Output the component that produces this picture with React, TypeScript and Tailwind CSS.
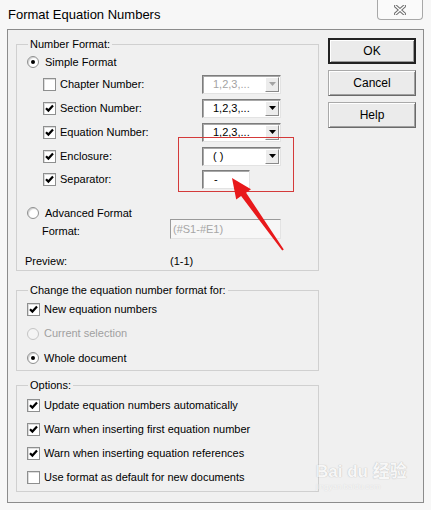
import React from 'react';

function Check({ checked }: { checked?: boolean }) {
  return (
    <span className="w-[13px] h-[13px] shrink-0 bg-white border border-[#8e8f8f] shadow-[inset_1px_1px_0_#dcdcdc] flex items-center justify-center">
      {checked && (
        <svg width="9" height="9" viewBox="0 0 9 9">
          <path d="M1 4.2 L3.4 6.6 L8 1.6" stroke="#000" strokeWidth="2.2" fill="none" />
        </svg>
      )}
    </span>
  );
}

function Radio({ checked, disabled }: { checked?: boolean; disabled?: boolean }) {
  return (
    <span
      className={
        disabled
          ? 'w-[12px] h-[12px] shrink-0 rounded-full border border-[#c4c4c4] bg-[#f4f4f4] flex items-center justify-center'
          : 'w-[12px] h-[12px] shrink-0 rounded-full border border-[#8e8f8f] bg-white shadow-[inset_1px_1px_1px_#d0d0d0] flex items-center justify-center'
      }
    >
      {checked && <span className="w-[4px] h-[4px] rounded-full bg-black" />}
    </span>
  );
}

function Combo({ value, disabled }: { value: string; disabled?: boolean }) {
  return (
    <div className="w-[79px] h-[19px] flex items-center bg-white border border-t-[#7d7d7d] border-l-[#7d7d7d] border-b-[#e3e3e3] border-r-[#e3e3e3] shadow-[inset_1px_1px_0_#a8a8a8]">
      <span className={'flex-1 pl-[10px] ' + (disabled ? 'text-[#a3a3a3]' : 'text-black')}>{value}</span>
      <span className="w-[14px] h-[15px] mr-[1px] flex items-center justify-center bg-[#ececec] border border-t-white border-l-white border-b-[#8a8a8a] border-r-[#8a8a8a]">
        <svg width="7" height="4" viewBox="0 0 7 4">
          <path d="M0 0 H7 L3.5 4 Z" fill={disabled ? '#a3a3a3' : '#000'} />
        </svg>
      </span>
    </div>
  );
}

function Button({ label, primary }: { label: string; primary?: boolean }) {
  return (
    <div
      className={
        'w-[88px] h-[26px] flex items-center justify-center bg-[#ebebeb] text-[12px] ' +
        (primary
          ? 'border-2 border-[#222] shadow-[inset_1px_1px_0_#fff,inset_-1px_-1px_0_#9a9a9a]'
          : 'border border-[#a9a9a9] border-b-[#6a6a6a] border-r-[#6a6a6a] shadow-[inset_1px_1px_0_#fff,inset_-1px_-1px_0_#a0a0a0]')
      }
    >
      {label}
    </div>
  );
}

function Group({ title, children, className }: { title: string; children: React.ReactNode; className?: string }) {
  return (
    <fieldset className={'w-[303px] border border-[#d0d0d0] px-0 ' + (className ?? '')}>
      <legend className="ml-[11px] px-[2px] h-[15px] leading-[15px]">{title}</legend>
      {children}
    </fieldset>
  );
}

const simpleRows = [
  { label: 'Chapter Number:', checked: false, combo: '1,2,3,...', disabled: true },
  { label: 'Section Number:', checked: true, combo: '1,2,3,...' },
  { label: 'Equation Number:', checked: true, combo: '1,2,3,...' },
  { label: 'Enclosure:', checked: true, combo: '( )' },
];

const options = [
  { label: 'Update equation numbers automatically', checked: true },
  { label: 'Warn when inserting first equation number', checked: true },
  { label: 'Warn when inserting equation references', checked: true },
  { label: 'Use format as default for new documents', checked: false },
];

export default function App() {
  return (
    <div className="relative w-[431px] h-[510px] overflow-hidden bg-[#f7f7f7] text-[11px] text-black font-['Liberation_Sans',Arial,sans-serif]">
      {/* title bar */}
      <div className="h-[29px] flex items-start">
        <span className="ml-[8px] mt-[7px] text-[13px] leading-[16px]">Format Equation Numbers</span>
        <div className="ml-auto mr-[8px] w-[46px] h-[20px] rounded-b-[4px] border border-t-0 border-[#a8a8a8] bg-[#fafafa] flex items-center justify-center">
          <svg width="12" height="10" viewBox="0 0 12 10">
            <path d="M1.5 1 L10.5 9 M10.5 1 L1.5 9" stroke="#6d6d6d" strokeWidth="3.4" strokeLinecap="square" />
            <path d="M1.5 1 L10.5 9 M10.5 1 L1.5 9" stroke="#fff" strokeWidth="1.4" strokeLinecap="square" />
          </svg>
        </div>
      </div>

      {/* client area */}
      <div className="ml-[7px] w-[417px] h-[474px] border border-[#8c8c8c] bg-[#f0f0f0] flex">
        <div className="pl-[8px] flex flex-col">
          <Group title="Number Format:" className="mt-[7px]">
            <div className="flex flex-col">
              <div className="h-[20px] flex items-center pl-[10px]">
                <Radio checked />
                <span className="ml-[6px]">Simple Format</span>
              </div>
              {simpleRows.map((r) => (
                <div key={r.label} className="h-[24px] flex items-center pl-[26px]">
                  <Check checked={r.checked} />
                  <span className="ml-[4px] w-[142px]">{r.label}</span>
                  <Combo value={r.combo} disabled={r.disabled} />
                </div>
              ))}
              <div className="h-[23px] flex items-center pl-[26px]">
                <Check checked />
                <span className="ml-[4px] w-[142px]">Separator:</span>
                <div className="w-[48px] h-[19px] flex items-center bg-white border border-t-[#7d7d7d] border-l-[#7d7d7d] border-b-[#e3e3e3] border-r-[#e3e3e3] shadow-[inset_1px_1px_0_#a8a8a8]">
                  <span className="pl-[11px]">-</span>
                </div>
              </div>
              <div className="mt-[14px] h-[16px] flex items-center pl-[10px]">
                <Radio />
                <span className="ml-[6px]">Advanced Format</span>
              </div>
              <div className="-mt-[2px] h-[20px] flex items-start pl-[25px]">
                <span className="w-[128px] mt-[6px] leading-[13px]">Format:</span>
                <div className="w-[111px] h-[20px] flex items-center bg-[#f7f7f7] border border-t-[#9a9a9a] border-l-[#9a9a9a] border-b-[#e3e3e3] border-r-[#e3e3e3]">
                  <span className="pl-[2px] text-[#a6a6a6]">(#S1-#E1)</span>
                </div>
              </div>
              <div className="mt-[13px] h-[18px] flex items-center pl-[8px]">
                <span className="w-[145px]">Preview:</span>
                <span>(1-1)</span>
              </div>
            </div>
          </Group>

          <Group title="Change the equation number format for:" className="mt-[12px]">
            <div className="flex flex-col">
              <div className="h-[23px] flex items-center pl-[10px]">
                <Check checked />
                <span className="ml-[4px]">New equation numbers</span>
              </div>
              <div className="h-[25px] flex items-center pl-[10px]">
                <Radio disabled />
                <span className="ml-[5px] text-[#a0a0a0]">Current selection</span>
              </div>
              <div className="h-[24px] flex items-center pl-[10px]">
                <Radio checked />
                <span className="ml-[5px]">Whole document</span>
              </div>
            </div>
          </Group>

          <Group title="Options:" className="mt-[7px]">
            <div className="flex flex-col pb-[2px]">
              {options.map((o) => (
                <div key={o.label} className="h-[24px] flex items-center pl-[10px]">
                  <Check checked={o.checked} />
                  <span className="ml-[4px]">{o.label}</span>
                </div>
              ))}
            </div>
          </Group>
        </div>

        <div className="ml-[9px] pt-[8px] flex flex-col gap-[6px]">
          <Button label="OK" primary />
          <Button label="Cancel" />
          <Button label="Help" />
        </div>
      </div>

      {/* annotation: red box + arrow */}
      <div className="absolute left-[178px] top-[137px] w-[116px] h-[55px] border border-[#d43a3a]" />
      <svg className="absolute left-0 top-0" width="431" height="510" viewBox="0 0 431 510">
        <polygon
          points="232,178 251,189.2 246.1,192.7 283.8,249.4 282.2,250.6 241.1,196.1 236.2,199.6"
          fill="#e8191b"
        />
      </svg>

      {/* watermark */}
      <div className="absolute left-[316px] top-[462px] flex flex-col items-start opacity-50 select-none">
        <span className="text-[17px] leading-[20px] font-bold text-white [text-shadow:0_0_1px_#9a9a9a,0_0_1px_#9a9a9a] font-['Liberation_Sans','Noto_Sans_CJK_SC',sans-serif]">
          Bai du 经验
        </span>
        <span className="text-[8px] leading-[9px] text-white [text-shadow:0_0_1px_#b0b0b0]">jingyan.baidu.com</span>
      </div>
    </div>
  );
}
